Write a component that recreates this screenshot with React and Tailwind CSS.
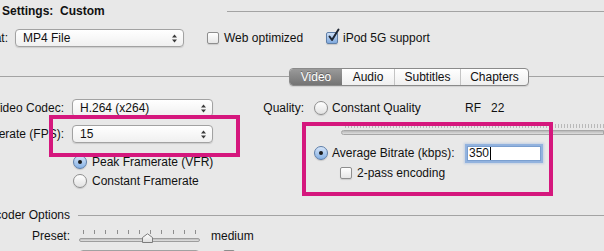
import React from "react";

const Arrows = () => (
  <svg width="5" height="9" viewBox="0 0 5 9" className="ml-auto mr-[6px]">
    <path d="M0 3.5 L2.5 0.5 L5 3.5 Z" fill="#3a3a3a" />
    <path d="M0 5.5 L2.5 8.5 L5 5.5 Z" fill="#3a3a3a" />
  </svg>
);

const Popup = ({ value, className = "" }) => (
  <div
    className={`flex items-center h-[18px] rounded-[4px] border border-[#a2a2a2] bg-gradient-to-b from-white to-[#f0f0f0] shadow-[0_1px_1px_rgba(0,0,0,0.12)] pl-[7px] ${className}`}
  >
    <span>{value}</span>
    <Arrows />
  </div>
);

const Checkbox = ({ checked }) =>
  checked ? (
    <div className="relative w-[12px] h-[12px] rounded-[2px] border border-[#5f7fa8] bg-gradient-to-b from-[#cfe0f6] to-[#7fa9dd] shadow-[0_1px_1px_rgba(0,0,0,0.15)]">
      <svg width="14" height="15" viewBox="0 0 14 15" className="absolute left-[0px] top-[-5px]">
        <path d="M2.5 8.5 L5 12 L11.5 1.5" stroke="#1e2633" strokeWidth="2" fill="none" strokeLinecap="round" strokeLinejoin="round" />
      </svg>
    </div>
  ) : (
    <div className="w-[12px] h-[12px] rounded-[2px] border border-[#8e8e8e] bg-gradient-to-b from-white to-[#e6e6e6] shadow-[0_1px_1px_rgba(0,0,0,0.12)]" />
  );

const Radio = ({ on }) =>
  on ? (
    <div className="flex items-center justify-center w-[14px] h-[14px] rounded-full border border-[#5d7ea9] bg-gradient-to-b from-[#d6e5f8] to-[#86b1e4] shadow-[0_1px_1px_rgba(0,0,0,0.15)]">
      <div className="w-[4px] h-[4px] rounded-full bg-[#1b1b1b]" />
    </div>
  ) : (
    <div className="w-[14px] h-[14px] rounded-full border border-[#8e8e8e] bg-gradient-to-b from-white to-[#e2e2e2] shadow-[0_1px_1px_rgba(0,0,0,0.12)]" />
  );

const Label = ({ w, children }) => (
  <div className={`flex justify-end whitespace-nowrap ${w}`}>{children}</div>
);

const tabs = [
  { name: "Video", w: "w-[52px]" },
  { name: "Audio", w: "w-[52px]" },
  { name: "Subtitles", w: "w-[66px]" },
  { name: "Chapters", w: "w-[68px]" },
];

const presetTicks = [0, 1, 2, 3, 4, 5, 6, 7, 8, 9, 10];

export default function App() {
  return (
    <div className="relative w-[604px] h-[251px] overflow-hidden bg-[#e8e8e8] text-[12px] leading-none text-[#111] font-['Liberation_Sans',Arial,sans-serif]">
      {/* settings */}
      <div className="flex items-center h-[22px]">
        <div className="w-[227px] pl-[2px] font-bold whitespace-nowrap">
          Settings:&nbsp;&nbsp;Custom
        </div>
        <div className="flex-1 h-px bg-[#a3a3a3]" />
      </div>

      {/* format */}
      <div className="flex items-center h-[32px]">
        <Label w="w-[8px]">Format:</Label>
        <Popup value="MP4 File" className="ml-[7px] w-[169px]" />
        <div className="flex items-center ml-[23px] w-[119px]">
          <Checkbox />
          <span className="ml-[5px]">Web optimized</span>
        </div>
        <div className="flex items-center">
          <Checkbox checked />
          <span className="ml-[5px]">iPod 5G support</span>
        </div>
      </div>

      {/* tabs */}
      <div className="flex items-center h-[45px]">
        <div className="w-[289px] h-px bg-[#a3a3a3]" />
        <div className="flex h-[18px] rounded-[4px] border border-[#8a8a8a] overflow-hidden bg-gradient-to-b from-white to-[#efefef] shadow-[0_1px_1px_rgba(0,0,0,0.1)]">
          {tabs.map((t, i) => (
            <div
              key={t.name}
              className={`flex items-center justify-center text-[12px] ${t.w} ${
                i === 0
                  ? "bg-gradient-to-b from-[#9a9a9a] to-[#747474] text-white [text-shadow:0_-1px_0_rgba(0,0,0,0.35)]"
                  : "text-[#111]"
              } ${i > 1 ? "border-l border-[#c4c4c4]" : ""}`}
            >
              {t.name}
            </div>
          ))}
        </div>
        <div className="flex-1 h-px bg-[#a3a3a3]" />
      </div>

      {/* video settings */}
      <div className="flex">
        <div className="w-[263px]">
          <div className="flex items-center h-[18px]">
            <Label w="w-[64px]">Video Codec:</Label>
            <Popup value="H.264 (x264)" className="ml-[8px] w-[141px]" />
          </div>
          <div className="flex items-center h-[18px] mt-[8px]">
            <Label w="w-[64px]">Framerate (FPS):</Label>
            <Popup value="15" className="ml-[8px] w-[141px]" />
          </div>
          <div className="flex items-center h-[15px] mt-[11px] pl-[73px]">
            <Radio on />
            <span className="ml-[5px]">Peak Framerate (VFR)</span>
          </div>
          <div className="flex items-center h-[15px] mt-[4px] pl-[73px]">
            <Radio />
            <span className="ml-[5px]">Constant Framerate</span>
          </div>
        </div>

        <div className="flex-1">
          <div className="flex items-center h-[18px]">
            <Label w="w-[41px]">Quality:</Label>
            <div className="ml-[10px]">
              <Radio />
            </div>
            <span className="ml-[4px] w-[133px]">Constant Quality</span>
            <span className="w-[26px]">RF</span>
            <span>22</span>
          </div>
          <div className="ml-[78px] mt-[7px]">
            <div className="ml-[4px] h-[4px] bg-[repeating-linear-gradient(90deg,#b9b9b9_0px,#b9b9b9_1px,transparent_1px,transparent_3px)]" />
            <div className="mt-[2px] h-[5px] rounded-l-full border border-[#a6a6a6] bg-gradient-to-b from-[#b8b8b8] to-[#dedede]" />
          </div>
          <div className="flex items-center h-[20px] mt-[8px]">
            <div className="ml-[51px]">
              <Radio on />
            </div>
            <span className="ml-[4px] w-[135px] whitespace-nowrap">Average Bitrate (kbps):</span>
            <div className="flex items-center w-[74px] h-[15px] bg-white border border-[#7a9fd0] shadow-[0_0_0_2px_rgba(125,165,220,0.7),0_0_2px_3px_rgba(125,165,220,0.35)] pl-[1px]">
              <span>350</span>
              <span className="ml-[1px] w-px h-[13px] bg-black" />
            </div>
          </div>
          <div className="flex items-center h-[16px] mt-[2px] pl-[77px]">
            <Checkbox />
            <span className="ml-[5px]">2-pass encoding</span>
          </div>
        </div>
      </div>

      {/* encoder options */}
      <div className="flex items-center h-[16px] mt-[19px]">
        <Label w="w-[70px]">Encoder Options</Label>
        <div className="ml-[8px] flex-1 h-px bg-[#a3a3a3]" />
      </div>
      <div className="flex items-center h-[18px] mt-[4px]">
        <Label w="w-[70px]">Preset:</Label>
        <div className="relative ml-[9px] w-[121px] h-[18px]">
          <div className="flex justify-between px-[4px] pt-[3px]">
            {presetTicks.map((t) => (
              <div key={t} className="w-px h-[4px] bg-[#8e8e8e]" />
            ))}
          </div>
          <div className="mt-[4px] h-[4px] rounded-full border border-[#9d9d9d] bg-gradient-to-b from-[#bdbdbd] to-[#e2e2e2]" />
          <svg width="13" height="11" viewBox="0 0 13 11" className="absolute left-[62px] top-[6px]">
            <defs>
              <linearGradient id="knob" x1="0" y1="0" x2="0" y2="1">
                <stop offset="0" stopColor="#ffffff" />
                <stop offset="1" stopColor="#dcdcdc" />
              </linearGradient>
            </defs>
            <path d="M1.5 4.5 L6.5 0.8 L11.5 4.5 V9.5 H1.5 Z" fill="url(#knob)" stroke="#7c7c7c" strokeWidth="1" strokeLinejoin="round" />
          </svg>
        </div>
        <span className="ml-[11px]">medium</span>
      </div>
      <div className="flex items-start mt-[5px]">
        <div className="ml-[79px] w-[121px] h-[18px] rounded-[4px] border border-[#a2a2a2] bg-white" />
        <div className="ml-[23px]">
          <Checkbox />
        </div>
      </div>

      {/* annotations */}
      <div className="absolute left-[49px] top-[115px] w-[191px] h-[42px] border-[4px] border-[#d5177d]" />
      <div className="absolute left-[302px] top-[122px] w-[251px] h-[74px] border-[4px] border-[#d5177d]" />
    </div>
  );
}
